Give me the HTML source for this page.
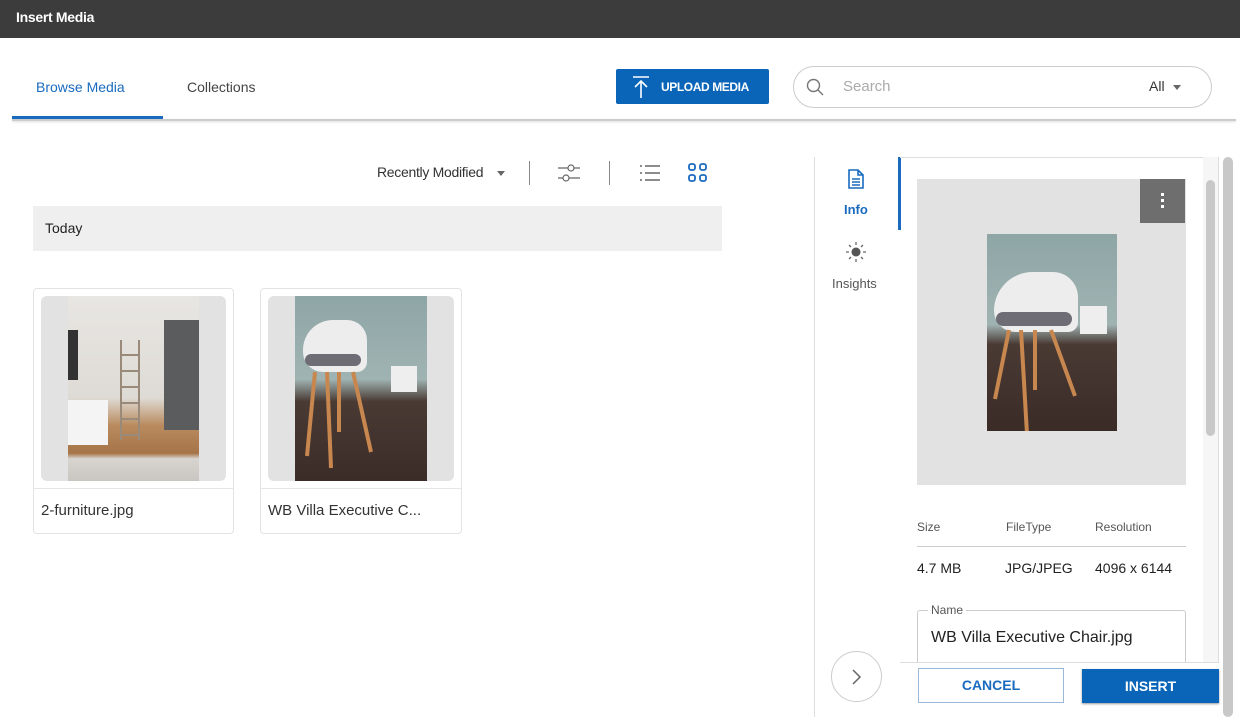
<!DOCTYPE html>
<html><head><meta charset="utf-8"><style>
*{margin:0;padding:0;box-sizing:border-box}
body{width:1251px;height:719px;background:#fff;font-family:"Liberation Sans",sans-serif;position:relative;overflow:hidden;color:#222}
.a{position:absolute}
.t{position:absolute;white-space:nowrap}
</style></head><body>
<div class="a" style="left:0;top:0;width:1240px;height:38px;background:#3c3c3c"></div>
<div class="t" style="left:16px;top:9px;color:#fff;font-weight:bold;font-size:14px;letter-spacing:-0.3px">Insert Media</div>
<div class="a" style="left:1240px;top:0;width:11px;height:38px;background:#fff"></div>

<div class="t" style="left:36px;top:79px;color:#1a6bbf;font-size:14px">Browse Media</div>
<div class="t" style="left:187px;top:79px;color:#444;font-size:14px">Collections</div>
<div class="a" style="left:12px;top:119px;width:1224px;height:2px;background:#ccc;box-shadow:0 1px 2px #ddd"></div>
<div class="a" style="left:12px;top:116px;width:151px;height:3px;background:#1a6bbf"></div>

<div class="a" style="left:616px;top:69px;width:153px;height:35px;background:#0a65b8;border-radius:2px"></div>
<svg class="a" style="left:630px;top:74px" width="22" height="26" viewBox="0 0 22 26"><path d="M3 3h16M11 24V7M5 13l6-6 6 6" stroke="#fff" stroke-width="1.6" fill="none"/></svg>
<div class="t" style="left:661px;top:80px;color:#fff;font-weight:bold;font-size:12px;letter-spacing:-0.4px">UPLOAD MEDIA</div>

<div class="a" style="left:793px;top:66px;width:419px;height:42px;border:1px solid #ccc;border-radius:21px"></div>
<svg class="a" style="left:806px;top:78px" width="18" height="18" viewBox="0 0 18 18"><circle cx="7.5" cy="7.5" r="6" stroke="#777" stroke-width="1.4" fill="none"/><path d="M12 12l5 5" stroke="#777" stroke-width="1.4"/></svg>
<div class="t" style="left:843px;top:78px;color:#aaa;font-size:15px">Search</div>
<div class="t" style="left:1149px;top:78px;color:#333;font-size:14px">All</div>
<div class="a" style="left:1173px;top:85px;border:4px solid transparent;border-top:5px solid #666"></div>

<div class="t" style="left:377px;top:164px;color:#333;font-size:14px;letter-spacing:-0.3px">Recently Modified</div>
<div class="a" style="left:497px;top:171px;border:4px solid transparent;border-top:5px solid #666"></div>
<div class="a" style="left:529px;top:161px;width:1px;height:24px;background:#888"></div>
<svg class="a" style="left:557px;top:161px" width="24" height="24" viewBox="0 0 24 24"><path d="M1 7h22M1 17h22" stroke="#666" stroke-width="1.2"/><circle cx="14" cy="7" r="3" fill="#fff" stroke="#666" stroke-width="1.2"/><circle cx="9" cy="17" r="3" fill="#fff" stroke="#666" stroke-width="1.2"/></svg>
<div class="a" style="left:609px;top:161px;width:1px;height:24px;background:#888"></div>
<svg class="a" style="left:639px;top:163px" width="22" height="20" viewBox="0 0 22 20"><path d="M1 3h2M1 10h2M1 17h2M6 3h15M6 10h15M6 17h15" stroke="#666" stroke-width="1.4"/></svg>
<svg class="a" style="left:688px;top:163px" width="20" height="20" viewBox="0 0 20 20" fill="none" stroke="#1a6bbf" stroke-width="1.8"><rect x="1" y="1" width="6" height="6" rx="2"/><rect x="12" y="1" width="6" height="6" rx="2"/><rect x="1" y="12" width="6" height="6" rx="2"/><rect x="12" y="12" width="6" height="6" rx="2"/></svg>

<div class="a" style="left:33px;top:206px;width:689px;height:45px;background:#efefef"></div>
<div class="t" style="left:45px;top:220px;font-size:14px;color:#222">Today</div>

<!-- card1 -->
<div class="a" style="left:33px;top:288px;width:201px;height:246px;border:1px solid #e3e3e3;border-radius:4px"></div>
<div class="a" style="left:41px;top:296px;width:185px;height:185px;background:#e2e2e2;border-radius:6px"></div>
<div class="a" style="left:68px;top:296px;width:131px;height:185px;background:linear-gradient(180deg,#e8e6e2 0%,#dedbd6 55%,#b98b5e 70%,#a57448 85%,#d8d5d0 88%,#c9c6c2 100%)"></div>
<div class="a" style="left:164px;top:320px;width:35px;height:110px;background:#5a5c5e"></div>
<div class="a" style="left:68px;top:330px;width:10px;height:50px;background:#333"></div>
<div class="a" style="left:120px;top:340px;width:20px;height:100px;border-left:2px solid #9a8a7a;border-right:2px solid #9a8a7a;background:repeating-linear-gradient(180deg,transparent 0 14px,#9a8a7a 14px 16px)"></div>
<div class="a" style="left:68px;top:400px;width:40px;height:45px;background:#f4f4f4"></div>
<div class="a" style="left:33px;top:488px;width:201px;height:1px;background:#e6e6e6"></div>
<div class="t" style="left:41px;top:502px;font-size:15px;color:#333">2-furniture.jpg</div>

<!-- card2 -->
<div class="a" style="left:260px;top:288px;width:202px;height:246px;border:1px solid #e3e3e3;border-radius:4px"></div>
<div class="a" style="left:268px;top:296px;width:186px;height:185px;background:#e2e2e2;border-radius:6px"></div>
<div class="a" style="left:295px;top:296px;width:132px;height:185px;background:linear-gradient(180deg,#8fa6a6 0%,#9fb3b2 45%,#4a3a34 57%,#3c2c28 100%)"></div>
<div class="a" style="left:303px;top:320px;width:64px;height:52px;background:#ededed;border-radius:30px 20px 10px 20px"></div>
<div class="a" style="left:305px;top:354px;width:56px;height:12px;background:#6e6c74;border-radius:6px"></div>
<svg class="a" style="left:295px;top:296px" width="132" height="185"><path d="M20 76L12 160M32 76l4 96M58 76l18 80M44 76l0 60" stroke="#c8874e" stroke-width="4"/><rect x="96" y="70" width="26" height="26" fill="#eee"/></svg>
<div class="a" style="left:260px;top:488px;width:202px;height:1px;background:#e6e6e6"></div>
<div class="t" style="left:268px;top:502px;font-size:15px;color:#333">WB Villa Executive C...</div>

<!-- right panel -->
<div class="a" style="left:814px;top:157px;width:1px;height:560px;background:#ddd"></div>
<svg class="a" style="left:847px;top:168px" width="18" height="22" viewBox="0 0 18 22" fill="none" stroke="#1a6bbf" stroke-width="1.6"><path d="M2 2h9l5 5v13H2z"/><path d="M11 2v5h5M5 11h8M5 14h8M5 17h8"/></svg>
<div class="t" style="left:844px;top:202px;color:#1a6bbf;font-size:13px;font-weight:bold">Info</div>
<svg class="a" style="left:845px;top:241px" width="22" height="22" viewBox="0 0 22 22"><circle cx="11" cy="11" r="4.5" fill="#555"/><path d="M11 1v3M11 18v3M1 11h3M18 11h3M4 4l2 2M16 16l2 2M4 18l2-2M16 6l2-2" stroke="#666" stroke-width="1.3"/></svg>
<div class="t" style="left:832px;top:276px;color:#555;font-size:13px">Insights</div>
<div class="a" style="left:898px;top:157px;width:3px;height:73px;background:#1a6bbf"></div>
<div class="a" style="left:900px;top:157px;width:319px;height:506px;border:1px solid #ddd;border-left:none"></div>
<div class="a" style="left:1203px;top:157px;width:15px;height:505px;background:#f6f6f6"></div>
<div class="a" style="left:1206px;top:180px;width:9px;height:256px;background:#c8c8c8;border-radius:5px"></div>
<div class="a" style="left:1223px;top:157px;width:10px;height:560px;background:#c8c8c8;border-radius:5px"></div>

<div class="a" style="left:917px;top:179px;width:269px;height:306px;background:#e2e2e2"></div>
<div class="a" style="left:1140px;top:179px;width:45px;height:44px;background:#6e6e6e"></div>
<div class="a" style="left:1161px;top:193px;width:3px;height:3px;background:#fff;box-shadow:0 6px 0 #fff,0 12px 0 #fff"></div>
<div class="a" style="left:987px;top:234px;width:130px;height:197px;background:linear-gradient(180deg,#8fa6a6 0%,#9fb3b2 46%,#4a3a34 56%,#3a2b27 100%)"></div>
<div class="a" style="left:994px;top:272px;width:84px;height:60px;background:#ededed;border-radius:40px 26px 10px 22px"></div>
<div class="a" style="left:996px;top:312px;width:76px;height:14px;background:#6e6c74;border-radius:7px"></div>
<svg class="a" style="left:987px;top:234px" width="130" height="197"><path d="M22 96L8 165M34 96l6 104M64 96l24 66M48 96v60" stroke="#c8874e" stroke-width="4"/><rect x="93" y="72" width="27" height="28" fill="#eee"/></svg>

<div class="t" style="left:917px;top:520px;font-size:12px;color:#555">Size</div>
<div class="t" style="left:1006px;top:520px;font-size:12px;color:#555">FileType</div>
<div class="t" style="left:1095px;top:520px;font-size:12px;color:#555">Resolution</div>
<div class="a" style="left:917px;top:546px;width:269px;height:1px;background:#ccc"></div>
<div class="t" style="left:917px;top:560px;font-size:14px;color:#222">4.7 MB</div>
<div class="t" style="left:1005px;top:560px;font-size:14px;color:#222">JPG/JPEG</div>
<div class="t" style="left:1095px;top:560px;font-size:14px;color:#222">4096 x 6144</div>
<div class="a" style="left:917px;top:610px;width:269px;height:52px;border:1px solid #ccc;border-bottom:none;border-radius:3px 3px 0 0"></div>
<div class="t" style="left:928px;top:603px;font-size:12px;color:#555;background:#fff;padding:0 3px">Name</div>
<div class="t" style="left:931px;top:629px;font-size:16px;color:#222">WB Villa Executive Chair.jpg</div>

<div class="a" style="left:831px;top:651px;width:51px;height:51px;border:1px solid #ccc;border-radius:50%"></div>
<svg class="a" style="left:850px;top:668px" width="12" height="18" viewBox="0 0 12 18"><path d="M3 2l7 7-7 7" stroke="#666" stroke-width="1.5" fill="none"/></svg>
<div class="a" style="left:918px;top:668px;width:146px;height:35px;border:1px solid #9ab9d8;text-align:center;line-height:33px;color:#1a6bbf;font-weight:bold;font-size:14px">CANCEL</div>
<div class="a" style="left:1082px;top:669px;width:137px;height:34px;background:#0a65b8;text-align:center;line-height:34px;color:#fff;font-weight:bold;font-size:14px;box-shadow:0 1px 2px #999">INSERT</div>
</body></html>
